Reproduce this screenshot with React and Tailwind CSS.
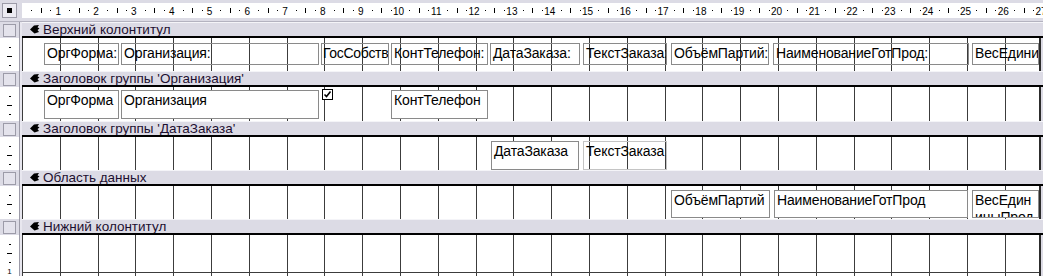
const CM = 37.8

const sections = [
  {
    title: 'Верхний колонтитул',
    h: 33,
    items: [
      { text: 'ОргФорма:', x: 22, y: 5, w: 75, h: 22, kind: 'label' },
      { text: 'Организация:', x: 99, y: 5, w: 198, h: 22, kind: 'label' },
      { text: 'ГосСобств', x: 299, y: 5, w: 68, h: 22, kind: 'label', tight: true },
      { text: 'КонтТелефон:', x: 369, y: 5, w: 97, h: 22, kind: 'label' },
      { text: 'ДатаЗаказа:', x: 468, y: 5, w: 90, h: 22, kind: 'label' },
      { text: 'ТекстЗаказа:', x: 561, y: 5, w: 84, h: 22, kind: 'label' },
      { text: 'ОбъёмПартий:', x: 649, y: 5, w: 98, h: 22, kind: 'label' },
      { text: 'НаименованиеГотПрод:', x: 751, y: 5, w: 196, h: 22, kind: 'label' },
      { text: 'ВесЕдиницыПрод:', x: 950, y: 5, w: 67, h: 22, kind: 'label' },
    ],
  },
  {
    title: "Заголовок группы 'Организация'",
    h: 34,
    items: [
      { text: 'ОргФорма', x: 22, y: 3, w: 75, h: 29, kind: 'box' },
      { text: 'Организация', x: 99, y: 3, w: 198, h: 29, kind: 'box' },
      { kind: 'check', x: 300, y: 2 },
      { text: 'КонтТелефон', x: 369, y: 3, w: 97, h: 29, kind: 'box' },
    ],
  },
  {
    title: "Заголовок группы 'ДатаЗаказа'",
    h: 33,
    items: [
      { text: 'ДатаЗаказа', x: 469, y: 4, w: 88, h: 29, kind: 'box' },
      { text: 'ТекстЗаказа', x: 561, y: 4, w: 84, h: 29, kind: 'faint' },
    ],
  },
  {
    title: 'Область данных',
    h: 33,
    items: [
      { text: 'ОбъёмПартий', x: 649, y: 4, w: 99, h: 28, kind: 'box' },
      { text: 'НаименованиеГотПрод', x: 752, y: 4, w: 194, h: 28, kind: 'box' },
      { text: 'ВесЕдиницыПрод', x: 950, y: 4, w: 67, h: 28, kind: 'box' },
    ],
  },
  { title: 'Нижний колонтитул', h: 42, items: [], footer: true },
]

function TopRuler() {
  const cms = [...Array(28)].map((_, i) => i)
  return (
    <svg width="1021" height="15" className="block">
      <rect width="1021" height="15" fill="#ffffff" />
      {cms.map((k) => {
        const p = k * CM
        return (
          <g key={k} fill="#000">
            <rect x={Math.round(p + 9.45)} y="7" width="1" height="1" />
            <rect x={Math.round(p + 18.9)} y="5" width="1" height="5" />
            <rect x={Math.round(p + 28.35)} y="7" width="1" height="1" />
            <text
              x={p + CM - 1.5}
              y="11.5"
              textAnchor="middle"
              fontSize="10"
              fontFamily="Liberation Sans, Arial, sans-serif"
            >
              {k + 1}
            </text>
          </g>
        )
      })}
    </svg>
  )
}

function SectionMark() {
  return (
    <svg width="10" height="9" viewBox="0 0 10 9" className="shrink-0">
      <path d="M0 4.5 L4 0.5 L9 0 L7.5 2.2 L9.5 3.5 L7.5 5 L9 7 L4.5 8.5 Z" fill="#000" />
    </svg>
  )
}

function CheckBox() {
  return (
    <svg width="11" height="11" viewBox="0 0 11 11">
      <rect x="0.5" y="0.5" width="10" height="10" fill="#fff" stroke="#000" />
      <path d="M2.5 5.5 L4.5 7.5 L8.5 2.5" fill="none" stroke="#000" strokeWidth="1.6" />
    </svg>
  )
}

function Control({ item }) {
  if (item.kind === 'check') {
    return (
      <div className="absolute" style={{ left: item.x, top: item.y }}>
        <CheckBox />
      </div>
    )
  }
  const cls =
    item.kind === 'label'
      ? 'border-[#8a8a8a] whitespace-nowrap'
      : item.kind === 'faint'
        ? 'border-[#c4c4c4] whitespace-nowrap'
        : 'border-[#8a8a8a] bg-white break-all'
  const pad = item.tight ? 'px-[1px] tracking-[-0.3px]' : 'px-[2px] tracking-[-0.15px]'
  return (
    <div
      className={`absolute overflow-hidden border pt-[1px] text-[14px] leading-[17px] text-black ${pad} ${cls}`}
      style={{ left: item.x, top: item.y, width: item.w, height: item.h }}
    >
      {item.text}
    </div>
  )
}

function LeftTicks({ footer }) {
  return (
    <div className="w-[19px] shrink-0 bg-white flex flex-col items-center pt-[9px] gap-[8px]">
      <div className="h-px w-[2px] bg-black" />
      <div className="h-px w-[5px] bg-black" />
      <div className="h-px w-[2px] bg-black" />
      {footer && <div className="text-[8px] leading-[8px] text-black -mt-[3px]">1</div>}
    </div>
  )
}

function Section({ s }) {
  return (
    <div className="flex flex-col shrink-0">
      <div className="flex h-[16px]">
        <div className="w-[19px] shrink-0 flex items-center justify-center">
          <div className="w-[13px] h-[13px] border border-[#9c9ba8] bg-[#e4e3ec]" />
        </div>
        <div className="w-[3px] shrink-0 border-l border-[#9c9ba8] bg-[#e8e7ef]" />
        <div className="flex-1 flex flex-col">
          <div className="h-px bg-[#f4f4f8]" />
          <div className="flex-1 flex items-center gap-[3px] pl-[8px] bg-[#dcdbe5] text-[13.5px] leading-[13px] text-[#1c1030]">
            <SectionMark />
            <span>{s.title}</span>
          </div>
          <div className="h-[2px] bg-black" />
        </div>
      </div>
      <div className="flex" style={{ height: s.h }}>
        <LeftTicks footer={s.footer} />
        <div className="w-[3px] shrink-0 border-l border-[#9c9ba8] bg-[#e8e7ef]" />
        <div className="relative w-[1019px] shrink-0 overflow-hidden border-r-2 border-[#2c2c2c] bg-white bg-[repeating-linear-gradient(90deg,#3c3c3c_0_1px,transparent_1px_37.8px)]">
          {s.footer && <div className="h-[38px] border-b border-[#3c3c3c]" />}
          {s.items.map((it, i) => (
            <Control key={i} item={it} />
          ))}
        </div>
        <div className="flex-1 bg-[#dcdbe5]" />
      </div>
    </div>
  )
}

export default function App() {
  return (
    <div className="w-[1043px] h-[276px] overflow-hidden bg-[#dcdbe5] font-['Liberation_Sans',Arial,sans-serif] flex flex-col">
      <div className="flex h-[22px] shrink-0 border-b border-[#b4b3c0]">
        <div className="w-[19px] shrink-0 flex items-center justify-center">
          <div className="w-[15px] h-[15px] border border-[#9c9ba8] bg-[#ecebf2] flex items-center justify-center">
            <div className="w-[5px] h-[5px] bg-black" />
          </div>
        </div>
        <div className="w-[3px] shrink-0" />
        <div className="pt-[3px]">
          <TopRuler />
        </div>
      </div>
      <div className="h-[2px] bg-[#dcdbe5]" />
      {sections.map((s, i) => (
        <Section key={i} s={s} />
      ))}
    </div>
  )
}
